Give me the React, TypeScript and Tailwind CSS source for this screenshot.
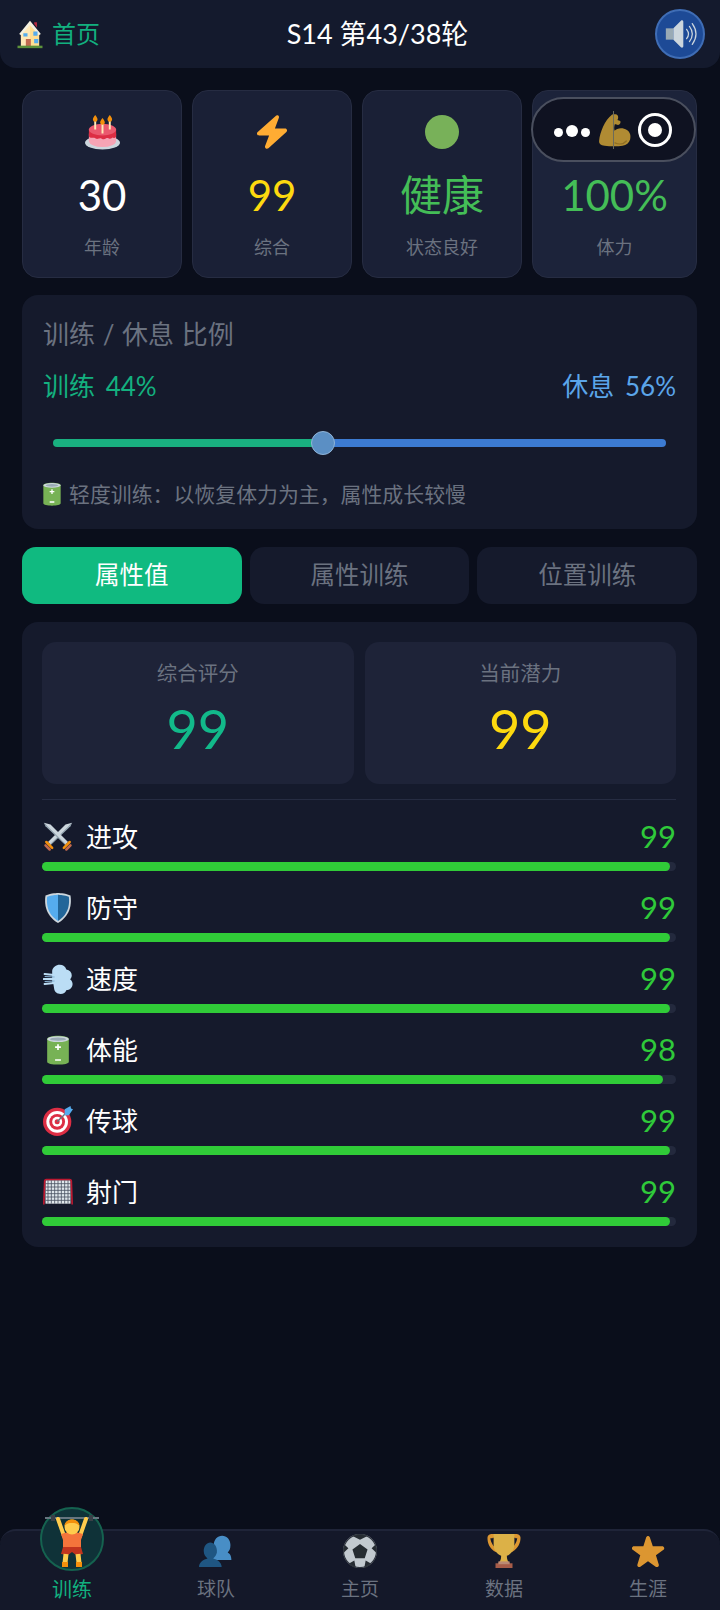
import React from 'react';

const cjk = "font-['Lato','Noto_Sans_CJK_SC',sans-serif]";

const IconHome = () => (
  <svg viewBox="0 0 36 36" className="w-[30px] h-[30px]">
    <path fill="#FFE8B6" d="M7 17 18 5l11 12v16H7z" />
    <path fill="#FFCC4D" d="M18 8 29 18v15H18z" opacity=".35" />
    <path fill="#F4F0E0" d="M18 2 5 18l2.400 1.600L18 7l10.600 12.600L31 18z" />
    <path fill="#DD2E44" d="M23 6l3.400 4.200V4H23z" opacity=".8" />
    <path fill="#C1694F" d="M13 24h6v9h-6z" />
    <path fill="#55ACEE" d="M10 17h5v4h-5zM22 15h5v5h-5zM23 24h5v5h-5z" />
    <path fill="#5C913B" d="M3 32h30v3H3z" />
  </svg>
);

const IconCake = () => (
  <svg viewBox="0 0 36 36" className="w-[35px] h-[35px]">
    <ellipse cx="18" cy="28.500" rx="18" ry="7" fill="#CCD6DD" />
    <ellipse cx="18" cy="26.500" rx="14" ry="6.500" fill="#F7A4B5" />
    <path fill="#F7A4B5" d="M4 19h28v7.500H4z" />
    <path fill="#DD2E44" d="M4 15h28v6.500c0 1.600-1.600 2.600-3 1.800-1-.6-2 1.600-3.600 1.200-1.400-.4-2.200-1.400-3.600-.6-1.600 1-3 1.400-4.600.4-1.400-.8-2.600-.4-4 .2-1.600.6-2.600-1.400-4-1.200-2.400.4-5.200 0-5.200-1.800z" />
    <ellipse cx="18" cy="15" rx="14" ry="6" fill="#EA596E" />
    <path fill="#FFE8B6" d="M9.500 6h2v9h-2zM17 9h2v10h-2zM24.500 6h2v9h-2z" />
    <path fill="#F4900C" d="M10.500 0c1.500 2 2.400 3 2.400 4.600a2.400 2.400 0 0 1-4.800 0C8.100 3 9 2 10.500 0zM18 3c1.500 2 2.400 3 2.400 4.600a2.400 2.400 0 0 1-4.800 0C15.600 6 16.500 5 18 3zM25.500 0c1.500 2 2.400 3 2.400 4.600a2.400 2.400 0 0 1-4.800 0C23.100 3 24 2 25.500 0z" />
  </svg>
);

const IconBolt = () => (
  <svg viewBox="0 0 36 36" className="w-[36px] h-[36px]">
    <path fill="#FFAC33" d="M32.900 14.300c-.3-.8-1-1.300-1.900-1.300H20.900L24.900 2.400c.3-.9 0-1.900-.8-2.200-.7-.5-1.700-.4-2.400.3L3.700 16.500c-.7.600-.9 1.500-.6 2.300.3.800 1.100 1.200 1.900 1.200h10.100L11.100 30.600c-.3.900 0 1.900.8 2.400.3.200.7.300 1.100.3.500 0 1-.2 1.400-.5l18-16.200c.5-.5.800-1.500.500-2.300z" transform="translate(0 1.400)" />
  </svg>
);

const IconMuscle = () => (
  <svg viewBox="0 0 36 38" className="w-[34px] h-[37px]">
    <path fill="#B08B33" d="M15 1c2.500-.6 5.200-.4 6 1.400.6 1.400.4 3.400-.4 4.400l3 1.200c.8 1.800-.4 4-2.400 4-1.400 0-2.400-.8-3.400-.6-.6 2-1 4.600-.2 6.800 2.400-3 8.800-3.600 13-.8 3.400 2.200 4.400 6 3.400 10-1 3.600-4 6-8 6.600-5 .8-13 .8-19 0-4-.4-6.200-2-5.800-5.600C2.200 20 7 7 15 1z" />
    <path fill="none" stroke="#8F6E24" strokeWidth="1.400" strokeLinecap="round" d="M18 31c4 2 9 1.400 12-2" />
  </svg>
);

const IconSwords = () => (
  <svg viewBox="0 0 36 36" className="w-[30px] h-[30px]">
    <path fill="#CCD6DD" d="M35 1 27 3 6 24l3 3L30 6.500z" />
    <path fill="#99AAB5" d="M35 1 8 27l1 1L33 5z" />
    <path fill="#CCD6DD" d="M1 1 9 3l21 21-3 3L6 6.500z" />
    <path fill="#99AAB5" d="M1 1l27 26-1 1L3 5z" />
    <path stroke="#C1694F" strokeWidth="3" strokeLinecap="round" d="M3 28l5 5M33 28l-5 5" />
    <path stroke="#F4900C" strokeWidth="3" strokeLinecap="round" d="M4 24l7 7M32 24l-7 7" />
  </svg>
);

const IconShield = () => (
  <svg viewBox="0 0 36 36" className="w-[30px] h-[30px]">
    <path fill="#CCD6DD" d="M33 3c-7-3-15-3-15-3S10 0 3 3C2 10 1 26 18 36 35 26 34 10 33 3z" />
    <path fill="#55ACEE" d="M18 2.200C16 2.300 10 2.800 5 4.500 4.200 11 4 25 18 33.600z" />
    <path fill="#226699" d="M18 2.200c2 .1 8 .6 13 2.300.8 6.500 1 20.500-13 29.100z" />
  </svg>
);

const IconDash = () => (
  <svg viewBox="0 0 36 36" className="w-[30px] h-[30px]">
    <path fill="#BBDDF5" d="M20 1c4 0 7 2.400 8 5.500 4 .8 6.500 3.600 6.500 7 0 2-.8 3.600-2 4.800 2 1.400 3 3.600 3 5.700 0 4.400-3.600 7.400-7.600 7.400-.6 2.600-3.400 4.600-6.900 4.600-4 0-7-2.400-7.500-5.600l-1-6-1.500-2V8c1-4 4.500-7 9-7z" />
    <path fill="#BBDDF5" stroke="#BBDDF5" strokeWidth="2.600" strokeLinecap="round" d="M2 12l14 1.500M1 18h14M2 24l14-1.500" />
    <path fill="none" stroke="#8CB8DA" strokeWidth="1.200" d="M2 15l12 .6M2 21l12-.6" />
  </svg>
);

const IconBattery = ({ className = 'w-[30px] h-[30px]' }: { className?: string }) => (
  <svg viewBox="0 0 36 36" className={className}>
    <path fill="#77B255" d="M5 5C5 2.500 11 1 18 1s13 1.500 13 4v27c0 2.500-6 3.500-13 3.500S5 34.500 5 32z" />
    <ellipse cx="18" cy="5" rx="13" ry="3.500" fill="#CCD6DD" />
    <ellipse cx="18" cy="5" rx="9.500" ry="2" fill="#99AAB5" />
    <path fill="#fff" d="M17 11h2v2.500h2.500v2H19V18h-2v-2.500h-2.500v-2H17zM14.500 29h7v2h-7z" />
  </svg>
);

const IconTarget = () => (
  <svg viewBox="0 0 36 36" className="w-[30px] h-[30px]">
    <circle cx="17" cy="19" r="17" fill="#DD2E44" />
    <circle cx="17" cy="19" r="13" fill="#fff" />
    <circle cx="17" cy="19" r="9.500" fill="#DD2E44" />
    <circle cx="17" cy="19" r="6" fill="#fff" />
    <circle cx="17" cy="19" r="3" fill="#DD2E44" />
    <path stroke="#66757F" strokeWidth="1.600" d="M17 19 30 6" />
    <path fill="#55ACEE" d="M26 4l7-4 .6 3L36 4l-5 7-5 .5z" />
  </svg>
);

const IconGoal = () => (
  <svg viewBox="0 0 36 36" className="w-[30px] h-[30px]">
    <path fill="#E1E8ED" d="M3 4h30v28H3z" />
    <path stroke="#4B5363" strokeWidth="1" d="M6 4v28M10 4v28M14 4v28M18 4v28M22 4v28M26 4v28M30 4v28M3 8h30M3 12h30M3 16h30M3 20h30M3 24h30M3 28h30" />
    <path fill="none" stroke="#BE1931" strokeWidth="2" strokeLinejoin="round" d="M1 33 2 5q0-2 2-2h28q2 0 2 2l1 28" />
  </svg>
);

const IconLifter = () => (
  <svg viewBox="0 0 54 52" className="w-[54px] h-[52px]">
    <path stroke="#66757F" strokeWidth="2" d="M0 3h54" />
    <path fill="#3A4048" d="M6 0h4v6H6zM44 0h4v6h-4z" />
    <path stroke="#FFCC4D" strokeWidth="4" strokeLinecap="round" d="M13 4l6 17M41 4l-6 17" />
    <path fill="#F4743B" d="M16 19q11-4 22 0l-2 6v8H18v-8z" />
    <circle cx="27" cy="12" r="7.500" fill="#FFCC4D" />
    <path fill="#F4900C" d="M19.500 11c0-4 3.500-6.500 7.500-6.500s7.500 2.500 7.500 6.500c-2-2.500-4.500-3-7.500-3s-5.500.5-7.500 3z" />
    <path fill="#C1341E" d="M18 32h18l2 7-7 1-4-3-4 3-7-1z" />
    <path stroke="#FFCC4D" strokeWidth="5" d="M21 39l-1 9M33 39l1 9" />
    <path fill="#F4900C" d="M17 47h6v5h-6zM31 47h6v5h-6z" />
  </svg>
);

const IconTeam = () => (
  <svg viewBox="0 0 36 36" className="w-[34px] h-[34px] opacity-80">
    <path fill="#55ACEE" d="M12 28c0-4 4-7 8-8-2-2-3-4-3-8 0-6 4-10 9-10s9 4 9 10c0 4-1 6-3 8 2 1 4 3 4 8z" transform="translate(-1 0) scale(.98)" />
    <path fill="#226699" d="M0 35c0-5 5-8 9-9-2-2-4-4-4-8 0-5 3-9 7-9s7 4 7 9c0 4-2 6-4 8 4 1 9 4 9 9z" />
  </svg>
);

const IconBall = () => (
  <svg viewBox="0 0 36 36" className="w-[34px] h-[34px] opacity-85">
    <circle cx="18" cy="18" r="18" fill="#E1E8ED" />
    <path fill="#292F33" d="M18 10.500l8 5.800-3 9.300H13l-3-9.300zM18 0c-3 0-6 .8-8 2l8 4 8-4c-2-1.200-5-2-8-2zM1.500 11c-1 2.400-1.700 6-1.300 9.500l5.500-5.500zM34.500 11c1 2.400 1.700 6 1.300 9.500L30.300 15zM6 31.500C8 33.800 11 35.400 13.500 36l-1.500-8zM30 31.500c-2 2.300-5 3.900-7.500 4.500l1.500-8z" />
    <circle cx="18" cy="18" r="17.500" fill="none" stroke="#343a42" strokeWidth="1.200" />
  </svg>
);

const IconTrophy = () => (
  <svg viewBox="0 0 36 36" className="w-[34px] h-[34px] opacity-85">
    <path fill="#FFAC33" d="M5 0h26c2.500 0 4.500 1.500 4.500 4 0 5-2 11-9 15l-3-2c5-3 8-8 8.500-12.500H30v-.5H6v.5H3.500C4 9 7 14 12 17l-3 2C2 15 .5 9 .5 4 .5 1.500 2.500 0 5 0z" />
    <path fill="#FFCC4D" d="M7 0h22v11c0 7-5 11-8 12 0 4 1 6 3 8H12c2-2 3-4 3-8-3-1-8-5-8-12z" />
    <path fill="#C1694F" d="M9 31h18v5H9z" />
    <path fill="#D99E82" d="M12 29h12v3H12z" />
  </svg>
);

const IconStar = () => (
  <svg viewBox="0 0 36 36" className="w-[34px] h-[34px] opacity-85">
    <path fill="#FFAC33" d="M27.300 35c-.4 0-.8-.1-1.200-.4L18 28.800l-8.100 5.800c-.7.500-1.700.5-2.400 0-.7-.5-1-1.400-.7-2.300l3-9.800-8-5.700c-.7-.5-1-1.400-.7-2.300.3-.8 1.100-1.400 2-1.400l10-.1 3-9.500c.4-.9 1.100-1.500 1.900-1.500s1.600.6 1.900 1.400l3.200 9.600 10 .1c.9 0 1.700.6 2 1.400.3.800 0 1.800-.7 2.300l-8 5.700 3 9.800c.3.900 0 1.800-.7 2.300-.4.300-.9.400-1.300.4z" />
  </svg>
);

const stats = [
  { icon: <IconCake />, value: '30', label: '年龄', color: 'text-white', extra: '' },
  { icon: <IconBolt />, value: '99', label: '综合', color: 'text-[#fdd90f]', extra: '' },
  { icon: <div className="w-[34px] h-[34px] rounded-full bg-[#78b159]" />, value: '健康', label: '状态良好', color: 'text-[#44bd57]', extra: '' },
  { icon: <div className="h-[36px]" />, value: '100%', label: '体力', color: 'text-[#44bd57]', extra: 'bg-[#1c233a]' },
];

const attrs = [
  { icon: <IconSwords />, name: '进攻', value: 99 },
  { icon: <IconShield />, name: '防守', value: 99 },
  { icon: <IconDash />, name: '速度', value: 99 },
  { icon: <IconBattery />, name: '体能', value: 98 },
  { icon: <IconTarget />, name: '传球', value: 99 },
  { icon: <IconGoal />, name: '射门', value: 99 },
];

const navItems = [
  { icon: <IconTeam />, label: '球队' },
  { icon: <IconBall />, label: '主页' },
  { icon: <IconTrophy />, label: '数据' },
  { icon: <IconStar />, label: '生涯' },
];

const App = () => {
  return (
    <div className={`relative w-[720px] h-[1610px] overflow-hidden flex flex-col bg-[#0a0e1b] ${cjk}`}>
      <header className="h-[68px] shrink-0 rounded-b-[16px] bg-[#141a2d] pl-[15px] pr-[15px] flex items-center justify-between">
        <div className="flex items-center gap-[7px] w-[175px]">
          <IconHome />
          <span className="text-[24px] text-[#12b07f]">首页</span>
        </div>
        <span className="text-[27px] text-white">S14 第43/38轮</span>
        <div className="w-[140px] flex justify-end">
          <div className="w-[50px] h-[50px] rounded-full bg-[#1d4a96] border-2 border-[#3f6db5] flex items-center justify-center">
            <svg viewBox="0 0 36 36" className="w-[34px] h-[34px]">
              <path fill="#99AAB5" d="M3 12h8v12H3z" />
              <path fill="#CCD6DD" d="M11 12 19 4c1-1 2.500-.4 2.500 1v26c0 1.400-1.500 2-2.500 1l-8-8z" />
              <path fill="none" stroke="#CCD6DD" strokeWidth="1.300" strokeLinecap="round" d="M25 13c2.400 3 2.400 7 0 10M28 10c3.800 5 3.800 11 0 16M31 7c5 7 5 15 0 22" />
            </svg>
          </div>
        </div>
      </header>

      <section className="mt-[22px] ml-[22px] mr-[23px] grid grid-cols-[160px_160px_160px_1fr] gap-[10px]">
        {stats.map((s) => (
          <div key={s.label} className={`h-[188px] rounded-[16px] border border-[#262c42] flex flex-col items-center pt-[23px] ${s.extra || 'bg-[#1a2036]'}`}>
            <div className="h-[36px] flex items-center justify-center">{s.icon}</div>
            <div className={`mt-[17px] text-[42px] leading-[56px] ${s.color}`}>{s.value}</div>
            <div className="mt-[11px] text-[18px] leading-[26px] text-[#6b7280]">{s.label}</div>
          </div>
        ))}
      </section>

      <section className="mt-[17px] ml-[22px] mr-[23px] h-[234px] rounded-[16px] bg-[#151a2c] pl-[21px] pr-[21px] pt-[21px]">
        <div className="text-[26px] leading-[36px] text-[#6b7280] [word-spacing:1px]">训练 / 休息 比例</div>
        <div className="mt-[16px] flex justify-between text-[26px] leading-[36px] [word-spacing:4px]">
          <span className="text-[#13b07f]">训练 44%</span>
          <span className="text-[#5ba5ea]">休息 56%</span>
        </div>
        <div className="relative mt-[35px] mx-[10px] h-[8px] rounded-full flex overflow-visible">
          <div className="w-[44%] rounded-l-full bg-[#19b080]" />
          <div className="w-[56%] rounded-r-full bg-[#3c7bd2]" />
          <div className="absolute left-[44%] top-1/2 -translate-x-1/2 -translate-y-1/2 w-[24px] h-[24px] rounded-full bg-[#5b8fc4] border border-[#8fb4d8]" />
        </div>
        <div className="mt-[32px] flex items-center gap-[5px] text-[20.900px] leading-[30px] text-[#6b7280]">
          <span className="-ml-[3px]"><IconBattery className="w-[24px] h-[24px]" /></span>
          <span>轻度训练：以恢复体力为主，属性成长较慢</span>
        </div>
      </section>

      <nav className="mt-[18px] ml-[22px] mr-[23px] grid grid-cols-3 gap-[8px]">
        <div className="h-[57px] rounded-[14px] bg-[#10ba80] text-white text-[24.500px] flex items-center justify-center">属性值</div>
        <div className="h-[57px] rounded-[14px] bg-[#151a2c] text-[#6b7280] text-[24.500px] flex items-center justify-center">属性训练</div>
        <div className="h-[57px] rounded-[14px] bg-[#151a2c] text-[#6b7280] text-[24.500px] flex items-center justify-center">位置训练</div>
      </nav>

      <section className="mt-[18px] ml-[22px] mr-[23px] h-[625px] rounded-[16px] bg-[#151a2c] pl-[20px] pr-[21px] pt-[20px]">
        <div className="grid grid-cols-2 gap-[11px]">
          <div className="h-[142px] rounded-[14px] bg-[#1e2338] flex flex-col items-center pt-[16px]">
            <div className="text-[20.500px] leading-[30px] text-[#6b7280]">综合评分</div>
            <div className="mt-[3px] text-[54px] leading-[76px] text-[#12b98a]">99</div>
          </div>
          <div className="h-[142px] rounded-[14px] bg-[#1e2338] flex flex-col items-center pt-[16px]">
            <div className="text-[20.500px] leading-[30px] text-[#6b7280]">当前潜力</div>
            <div className="mt-[3px] text-[54px] leading-[76px] text-[#fdd90f]">99</div>
          </div>
        </div>
        <div className="mt-[15px] border-t border-[#262c42]" />
        <div className="mt-[20px] flex flex-col gap-[20px]">
          {attrs.map((a) => (
            <div key={a.name}>
              <div className="h-[34px] flex items-center">
                <div className="w-[31px] flex justify-center">{a.icon}</div>
                <span className="ml-[13px] text-[26px] text-white">{a.name}</span>
                <span className="ml-auto text-[31px] leading-[34px] -mt-[2px] text-[#2fc93a]">{a.value}</span>
              </div>
              <div className="mt-[8px] h-[9px] rounded-full bg-[#23293d]">
                <div className="h-full rounded-full bg-[#30cb38]" style={{ width: `${a.value}%` }} />
              </div>
            </div>
          ))}
        </div>
      </section>

      <footer className="relative mt-auto h-[81px] rounded-t-[16px] border-t-2 border-[#1f2438] bg-[#141829] grid grid-cols-5">
        <div className="relative flex flex-col items-center justify-end pb-[6px]">
          <div className="absolute left-1/2 -top-[24px] -translate-x-1/2 w-[64px] h-[64px] rounded-full border-2 border-[#15624f] bg-[#0f3238]" />
          <div className="absolute left-1/2 -top-[16px] -translate-x-1/2"><IconLifter /></div>
          <span className="text-[20px] leading-[30px] text-[#12b07f]">训练</span>
        </div>
        {navItems.map((n) => (
          <div key={n.label} className="flex flex-col items-center justify-end pb-[6px]">
            {n.icon}
            <span className="mt-[6px] text-[19px] leading-[30px] text-[#6b7280]">{n.label}</span>
          </div>
        ))}
      </footer>

      {/* wechat capsule over the page */}
      <div className="absolute left-[531px] top-[97px] w-[165px] h-[65px] rounded-full border-2 border-[#4a4f5e] bg-[#0f1220]/95">
        <div className="absolute left-[65px] top-[14px]"><IconMuscle /></div>
        <div className="absolute left-[80px] top-[12px] w-[1px] h-[38px] bg-[#6b6a5a]" />
        <div className="absolute left-[21px] top-[29px] w-[9px] h-[9px] rounded-full bg-white" />
        <div className="absolute left-[33px] top-[26px] w-[12px] h-[12px] rounded-full bg-white" />
        <div className="absolute left-[48px] top-[29px] w-[9px] h-[9px] rounded-full bg-white" />
        <div className="absolute left-[105px] top-[14px] w-[34px] h-[34px] rounded-full border-[3.500px] border-white flex items-center justify-center">
          <div className="w-[14px] h-[14px] rounded-full bg-white" />
        </div>
      </div>
    </div>
  );
};

export default App;
